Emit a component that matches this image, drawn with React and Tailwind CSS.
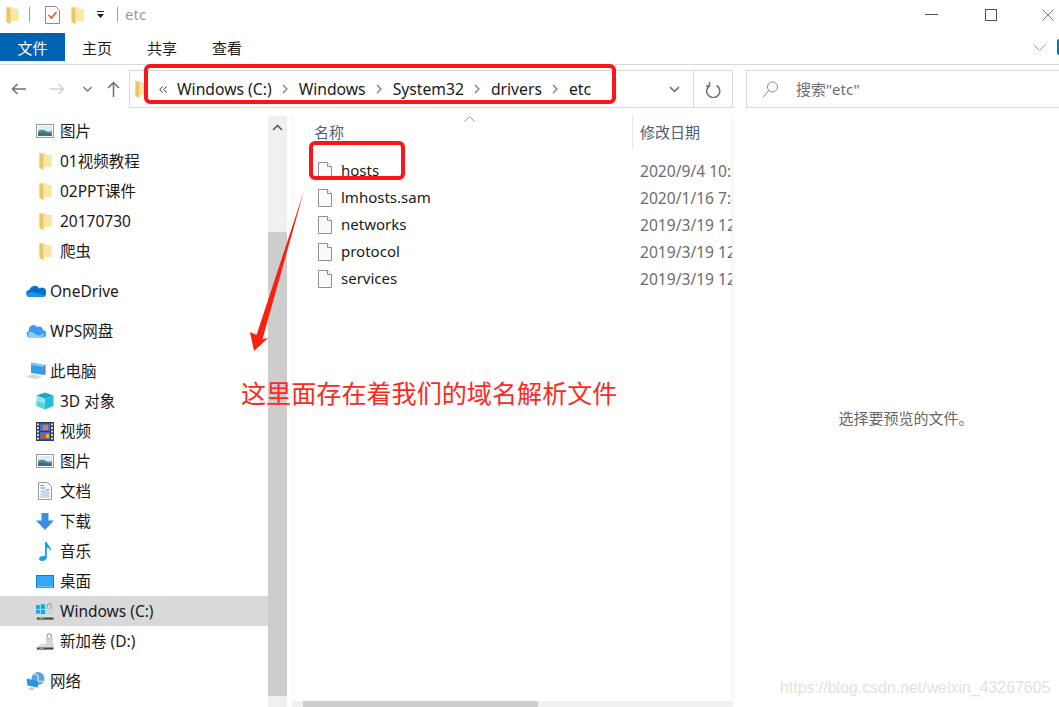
import React from 'react';

const FONT = "font-['Noto_Sans','Noto_Sans_CJK_SC',sans-serif]";

function FolderIcon({ className = '' }) {
    return (
        <svg className={className} width="13" height="18" viewBox="0 0 13 18">
            <path d="M0.500 1h6l1 2h5v12H4.500v3L0.500 16z" fill="#fbe29a" />
            <path d="M0.500 1l4 2v15l-4-2z" fill="#f0c55c" />
            <path d="M4.500 4h8v11h-8z" fill="#fde7a8" />
        </svg>
    );
}

function PictureIcon() {
    return (
        <svg width="18" height="14" viewBox="0 0 18 14">
            <rect x="0.500" y="0.500" width="17" height="13" fill="#fff" stroke="#9a9a9a" />
            <rect x="2" y="2" width="14" height="10" fill="#dcedf7" />
            <path d="M2 7c3-2 6-1 8 0s4 1 6 0v5H2z" fill="#5f8b80" />
            <path d="M2 9c4-1 9 0 14 1v2H2z" fill="#3e6b8f" />
        </svg>
    );
}

function OneDriveIcon() {
    return (
        <svg width="20" height="14" viewBox="0 0 20 14">
            <path d="M4 13a3.500 3.500 0 0 1-.5-7A5.500 5.500 0 0 1 13.500 4.500 4 4 0 0 1 19.800 9 3.500 3.500 0 0 1 17 13z" fill="#0a6fc2" />
            <path d="M0.600 10.500C2 8 6 7.500 9 8.500l9 2.500c.5 1 0 2-1 2H4c-1.500 0-3-1-3.400-2.500z" fill="#1f94e0" />
        </svg>
    );
}

function WpsIcon() {
    return (
        <svg width="20" height="14" viewBox="0 0 20 14">
            <path d="M4 13.500a3.500 3.500 0 0 1-1-6.800A4.500 4.500 0 0 1 11 3a4 4 0 0 1 6 3 3.800 3.800 0 0 1 0 7.500z" fill="#3d9bf0" />
            <path d="M2 9c3-2 5-1 7 1s5 2 9-1c0 3-2 4.500-4 4.500H4C3 13.500 2 11 2 9z" fill="#8ccbff" />
        </svg>
    );
}

function PcIcon() {
    return (
        <svg width="21" height="18" viewBox="0 0 21 18">
            <path d="M6 0.500l13 2.500v10l-13-2z" fill="#2f9fe8" />
            <path d="M6 0.500l13 2.500v2L6 3z" fill="#7fcdf5" />
            <path d="M19 3l1.500-.5v10L19 13z" fill="#6a7f8e" />
            <path d="M0.500 14.500L8 12l9 2.500-6 3z" fill="#d5d9dc" />
        </svg>
    );
}

function CubeIcon() {
    return (
        <svg width="18" height="18" viewBox="0 0 18 18">
            <path d="M9 0.500l8.500 3L9 7 0.500 3.500z" fill="#18a9c9" />
            <path d="M0.500 3.500L9 7v10.500l-8.500-3.500z" fill="#8fe6e6" />
            <path d="M17.500 3.500L9 7v10.500l8.500-3.500z" fill="#21c0d8" />
            <path d="M0.500 9L9 12v5.500l-8.500-3.500z" fill="#5ad5de" />
        </svg>
    );
}

function FilmIcon() {
    return (
        <svg width="18" height="19" viewBox="0 0 18 19">
            <rect width="18" height="19" fill="#3a3a3a" />
            <rect x="4" y="1.500" width="10" height="7.500" fill="#3f6fd0" />
            <rect x="4" y="10" width="10" height="7.500" fill="#3f6fd0" />
            <rect x="7" y="3" width="5" height="5" fill="#e8783a" />
            <rect x="6" y="12" width="3" height="4" fill="#d84a3a" />
            <rect x="10" y="12" width="3" height="4" fill="#e8b03a" />
            {[1.500, 5, 8.500, 12, 15.500].map((y) => (
                <g key={y}>
                    <rect x="1" y={y} width="2" height="2" fill="#ddd" />
                    <rect x="15" y={y} width="2" height="2" fill="#ddd" />
                </g>
            ))}
        </svg>
    );
}

function DocsIcon() {
    return (
        <svg width="14" height="18" viewBox="0 0 14 18">
            <path d="M0.500 0.500h9l4 4v13H0.500z" fill="#fff" stroke="#9a9a9a" />
            <path d="M2.500 3.500h3M2.500 6h5" stroke="#2f8fd8" />
            <path d="M8 7.500h3.500M2.500 9h9M2.500 11h9M2.500 13h9M2.500 15h9" stroke="#9ab0c0" />
        </svg>
    );
}

function DownloadIcon() {
    return (
        <svg width="18" height="17" viewBox="0 0 18 17">
            <path d="M5.500 0h7v7.500H18L9 17 0 7.500h5.500z" fill="#3a8fe0" />
        </svg>
    );
}

function MusicIcon() {
    return (
        <svg width="13" height="19" viewBox="0 0 13 19">
            <path d="M6 0h1.800c.4 3 4.700 4.500 4.200 9-.8-2-2.500-3.200-4.200-3.500V15.500c0 2-2.500 3.500-5 3.500C1 19 0 18 0 16.800 0 15 2.500 13.500 6 14z" fill="#12a0ea" />
        </svg>
    );
}

function DesktopIcon() {
    return (
        <svg width="18" height="13" viewBox="0 0 18 13">
            <rect width="18" height="13" fill="#0f7fd0" />
            <rect x="1" y="1" width="16" height="10.500" fill="#2fa8f5" />
            <rect x="1" y="11.500" width="16" height="0.800" fill="#bfe4fa" />
        </svg>
    );
}

function DriveIcon({ win }) {
    return (
        <svg width="21" height="21" viewBox="0 0 21 21">
            <path d="M13 6V4a2.500 2.500 0 0 1 5 0v2" fill="none" stroke="#8f9aa3" strokeWidth="1.300" />
            <rect x="12" y="6" width="7.500" height="8" rx="1" fill="#b9c6cf" />
            <path d="M12 9h7.500M12 11.500h7.500" stroke="#e8edf0" />
            <path d="M6 13h12l3 1-.5 4H1l.5-1.500z" fill="#d7dadd" />
            <path d="M1 17.500h19.500V20H1z" fill="#45494c" />
            <rect x="4" y="18" width="5" height="1.200" fill="#62c35a" />
            {win && (
                <g fill="#12a8e8">
                    <rect x="0" y="3" width="4.500" height="4.500" />
                    <rect x="5.500" y="2" width="5" height="5.500" />
                    <rect x="0" y="8.500" width="4.500" height="4.500" />
                    <rect x="5.500" y="8.500" width="5" height="5" />
                </g>
            )}
        </svg>
    );
}

function NetworkIcon() {
    return (
        <svg width="20" height="18" viewBox="0 0 20 18">
            <circle cx="12" cy="6.500" r="6.500" fill="#5aa3d8" />
            <path d="M8 2c3 0 5 2 4 5s2 3 5 2" fill="none" stroke="#bfe0f2" strokeWidth="1.500" />
            <path d="M0.500 6.500L12 9v6.500L1.500 13.500z" fill="#1f9ae0" />
            <path d="M4 15l4 1v2H2z" fill="#c9cfd3" />
        </svg>
    );
}

function FileIcon() {
    return (
        <svg className="shrink-0" width="14" height="18" viewBox="0 0 14 18">
            <path d="M0.500 0.500h9l4 4v13H0.500z" fill="#fafafa" stroke="#8f8f8f" />
            <path d="M9.500 0.500v4h4" fill="#fff" stroke="#8f8f8f" />
        </svg>
    );
}

function Crumb({ children }) {
    return <span className="pt-[2px] text-[15.7px] text-[#1a1a1a]">{children}</span>;
}

function CrumbSep() {
    return (
        <span className="w-[27px] flex justify-center">
            <svg width="6" height="10" viewBox="0 0 6 10">
                <path d="M1 1l4 4-4 4" fill="none" stroke="#777" strokeWidth="1.200" />
            </svg>
        </span>
    );
}

function NavRow({ icon, label, top, active }) {
    return (
        <div className={`h-[30px] flex items-center text-[15.500px] text-[#1a1a1a] ${top ? 'pl-[25px]' : 'pl-[36px]'} ${active ? 'bg-[#d9d9d9]' : ''}`}>
            <span className={`flex justify-center shrink-0 ${top ? 'w-[21px] mr-[4px]' : 'w-[18px] mr-[6px]'}`}>{icon}</span>
            <span className="pt-[2px]">{label}</span>
        </div>
    );
}

const files = [
    { name: 'hosts', date: '2020/9/4 10:21' },
    { name: 'lmhosts.sam', date: '2020/1/16 7:41' },
    { name: 'networks', date: '2019/3/19 12:46' },
    { name: 'protocol', date: '2019/3/19 12:46' },
    { name: 'services', date: '2019/3/19 12:46' },
];

export default function App() {
    return (
        <div className={`relative w-[1059px] h-[707px] overflow-hidden bg-white flex flex-col ${FONT}`}>
            {/* Title bar */}
            <div className="h-[33px] flex items-center shrink-0 pl-[6px] pb-[4px]">
                <FolderIcon />
                <span className="w-px h-[15px] bg-[#a0a0a0] ml-[10px]" />
                <svg className="ml-[15px]" width="15" height="18" viewBox="0 0 15 18">
                    <path d="M0.500 0.500h10l4 4v13H0.500z" fill="#fff" stroke="#8a8a8a" />
                    <path d="M3.500 9l3 3 5-6" fill="none" stroke="#e8562a" strokeWidth="1.600" />
                </svg>
                <FolderIcon className="ml-[11px]" />
                <svg className="ml-[12px]" width="9" height="8" viewBox="0 0 9 8">
                    <path d="M1 0.500h7" stroke="#222" />
                    <path d="M1 3h7L4.500 7z" fill="#222" />
                </svg>
                <span className="w-px h-[15px] bg-[#a0a0a0] ml-[12px]" />
                <span className="ml-[7px] text-[15px] text-[#999]">etc</span>
                <span className="ml-auto mr-[47px] w-[13px] h-px bg-[#555]" />
                <span className="mr-[45px] w-[12px] h-[12px] border border-[#555]" />
                <svg className="mr-[5px]" width="12" height="12" viewBox="0 0 12 12">
                    <path d="M0.500 0.500l11 11M11.500 0.500l-11 11" stroke="#555" strokeWidth="0.800" />
                </svg>
            </div>

            {/* Ribbon tabs */}
            <div className="h-[32px] shrink-0 border-b border-[#d9d9d9] flex items-start text-[15px] text-[#1a1a1a]">
                <div className="w-[65px] h-[28px] pt-[2px] bg-[#0063b1] text-white flex items-center justify-center">文件</div>
                <div className="ml-[17px] w-[30px] h-[28px] pt-[2px] flex items-center justify-center">主页</div>
                <div className="ml-[35px] w-[30px] h-[28px] pt-[2px] flex items-center justify-center">共享</div>
                <div className="ml-[35px] w-[30px] h-[28px] pt-[2px] flex items-center justify-center">查看</div>
                <div className="ml-auto h-[28px] flex items-center">
                    <svg className="mr-[11px]" width="13" height="7" viewBox="0 0 13 7">
                        <path d="M0.500 0.500l6 6 6-6" fill="none" stroke="#999" />
                    </svg>
                    <span className="w-[2px] h-[16px] rounded-l-full bg-[#0a6fc9]" />
                </div>
            </div>

            {/* Toolbar */}
            <div className="h-[51px] shrink-0 flex items-start pt-[5px]">
                <div className="w-[129px] h-[38px] flex items-center shrink-0 pl-[11px]">
                    <svg width="15" height="12" viewBox="0 0 15 12">
                        <path d="M15 6H1.500M6.500 1L1.500 6l5 5" fill="none" stroke="#707070" strokeWidth="1.500" />
                    </svg>
                    <svg className="ml-[24px]" width="15" height="12" viewBox="0 0 15 12">
                        <path d="M0 6h13.500M8.500 1l5 5-5 5" fill="none" stroke="#cfcfcf" strokeWidth="1.500" />
                    </svg>
                    <svg className="ml-[18px]" width="9" height="6" viewBox="0 0 9 6">
                        <path d="M0.500 1l4 4 4-4" fill="none" stroke="#777" strokeWidth="1.300" />
                    </svg>
                    <svg className="ml-[15px]" width="13" height="16" viewBox="0 0 13 16">
                        <path d="M6.500 16V1.500M1 7l5.500-5.500L12 7" fill="none" stroke="#707070" strokeWidth="1.500" />
                    </svg>
                </div>
                <div className="w-[604px] h-[38px] border border-[#d9d9d9] flex items-center shrink-0">
                    <FolderIcon className="ml-[5px]" />
                    <svg className="ml-[11px] mr-[10px]" width="8" height="7" viewBox="0 0 8 7">
                        <path d="M3.500 0.500L0.800 3.500l2.700 3M7.500 0.500L4.800 3.500l2.700 3" fill="none" stroke="#333" />
                    </svg>
                    <Crumb>Windows (C:)</Crumb>
                    <CrumbSep />
                    <Crumb>Windows</Crumb>
                    <CrumbSep />
                    <Crumb>System32</Crumb>
                    <CrumbSep />
                    <Crumb>drivers</Crumb>
                    <CrumbSep />
                    <Crumb>etc</Crumb>
                    <span className="ml-auto w-[38px] flex justify-center">
                        <svg width="11" height="7" viewBox="0 0 11 7">
                            <path d="M1 1l4.500 4.500L10 1" fill="none" stroke="#666" strokeWidth="1.500" />
                        </svg>
                    </span>
                    <span className="w-[39px] h-full border-l border-[#d9d9d9] flex items-center justify-center">
                        <svg width="15" height="17" viewBox="0 0 15 17">
                            <path d="M4 4.500a6.500 6.500 0 1 0 6.500 0M3.500 1v4H0" fill="none" stroke="#707070" strokeWidth="1.500" />
                        </svg>
                    </span>
                </div>
                <div className="ml-[13px] flex-1 h-[38px] border border-r-0 border-[#d9d9d9] flex items-center text-[15px] text-[#6d6d6d]">
                    <svg className="ml-[15px] mr-[17px]" width="17" height="17" viewBox="0 0 17 17">
                        <circle cx="10.500" cy="6" r="5" fill="none" stroke="#8a8a8a" />
                        <path d="M6.800 9.500L1 16" stroke="#8a8a8a" />
                    </svg>
                    搜索"etc"
                </div>
            </div>

            {/* Body */}
            <div className="flex-1 flex min-h-0">
                <nav className="w-[268px] shrink-0">
                    <NavRow icon={<PictureIcon />} label="图片" />
                    <NavRow icon={<FolderIcon />} label="01视频教程" />
                    <NavRow icon={<FolderIcon />} label="02PPT课件" />
                    <NavRow icon={<FolderIcon />} label="20170730" />
                    <NavRow icon={<FolderIcon />} label="爬虫" />
                    <div className="h-[10px]" />
                    <NavRow top icon={<OneDriveIcon />} label="OneDrive" />
                    <div className="h-[10px]" />
                    <NavRow top icon={<WpsIcon />} label="WPS网盘" />
                    <div className="h-[10px]" />
                    <NavRow top icon={<PcIcon />} label="此电脑" />
                    <NavRow icon={<CubeIcon />} label="3D 对象" />
                    <NavRow icon={<FilmIcon />} label="视频" />
                    <NavRow icon={<PictureIcon />} label="图片" />
                    <NavRow icon={<DocsIcon />} label="文档" />
                    <NavRow icon={<DownloadIcon />} label="下载" />
                    <NavRow icon={<MusicIcon />} label="音乐" />
                    <NavRow icon={<DesktopIcon />} label="桌面" />
                    <NavRow active icon={<DriveIcon win />} label="Windows (C:)" />
                    <NavRow icon={<DriveIcon />} label="新加卷 (D:)" />
                    <div className="h-[10px]" />
                    <NavRow top icon={<NetworkIcon />} label="网络" />
                </nav>

                {/* Nav scrollbar */}
                <div className="w-[19px] shrink-0 flex flex-col bg-[#f0f0f0]">
                    <div className="h-[116px] flex justify-center pt-[8px]">
                        <svg width="11" height="7" viewBox="0 0 11 7">
                            <path d="M1 6l4.500-4.500L10 6" fill="none" stroke="#505050" strokeWidth="1.500" />
                        </svg>
                    </div>
                    <div className="h-[464px] bg-[#cdcdcd]" />
                </div>
                <div className="w-[6px] shrink-0 border-r border-[#f5f5f5]" />

                {/* File list */}
                <div className="w-[440px] shrink-0 flex flex-col border-r border-[#f0f0f0]">
                    <div className="h-[32px] flex shrink-0">
                        <div className="w-[339px] relative pl-[21px] pt-[5px] text-[15px] text-[#4c607a]">
                            <svg className="absolute left-[171px] top-0" width="11" height="6" viewBox="0 0 11 6">
                                <path d="M0.500 5.500l5-5 5 5" fill="none" stroke="#999" />
                            </svg>
                            名称
                        </div>
                        <div className="flex-1 border-l border-[#e5e5e5] pl-[7px] pt-[5px] text-[15px] text-[#4c607a]">修改日期</div>
                    </div>
                    <div className="flex-1 pt-[9px]">
                        {files.map((f) => (
                            <div key={f.name} className="h-[27px] flex items-center">
                                <span className="w-[339px] flex items-center pl-[25px] text-[15px] text-[#1a1a1a]">
                                    <FileIcon />
                                    <span className="ml-[9px]">{f.name}</span>
                                </span>
                                <span className="flex-1 pl-[8px] pt-[2px] text-[15.600px] text-[#6d6d6d] whitespace-nowrap overflow-hidden">{f.date}</span>
                            </div>
                        ))}
                    </div>
                    <div className="h-[6px] shrink-0 flex bg-[#f0f0f0]">
                        <div className="ml-[10px] w-[235px] bg-[#cdcdcd]" />
                    </div>
                </div>

                {/* Preview pane */}
                <div className="flex-1 flex justify-center pl-[20px] pt-[291px] text-[15px] text-[#666]">选择要预览的文件。</div>
            </div>

            {/* Annotations drawn over the window */}
            <div className="absolute left-[144px] top-[64px] w-[472px] h-[40px] border-[4px] border-[#f8161a] rounded-[6px]" />
            <div className="absolute left-[309px] top-[141px] w-[96px] h-[39px] border-[4px] border-[#f8161a] rounded-[6px]" />
            <svg className="absolute left-[245px] top-[185px]" width="65" height="170" viewBox="245 185 65 170">
                <path d="M304 191L262.500 339 268 338 254 351 250 332 256.500 335z" fill="#f9200f" />
            </svg>
            <div className="absolute left-[241px] top-[376px] text-[25.100px] leading-[34px] text-[#fb2a1c] whitespace-nowrap">这里面存在着我们的域名解析文件</div>
            <div className="absolute left-[780px] top-[678px] font-['Liberation_Sans',sans-serif] text-[15.900px] leading-[20px] text-[#e2e2e2] whitespace-nowrap">https://blog.csdn.net/weixin_43267605</div>
        </div>
    );
}
